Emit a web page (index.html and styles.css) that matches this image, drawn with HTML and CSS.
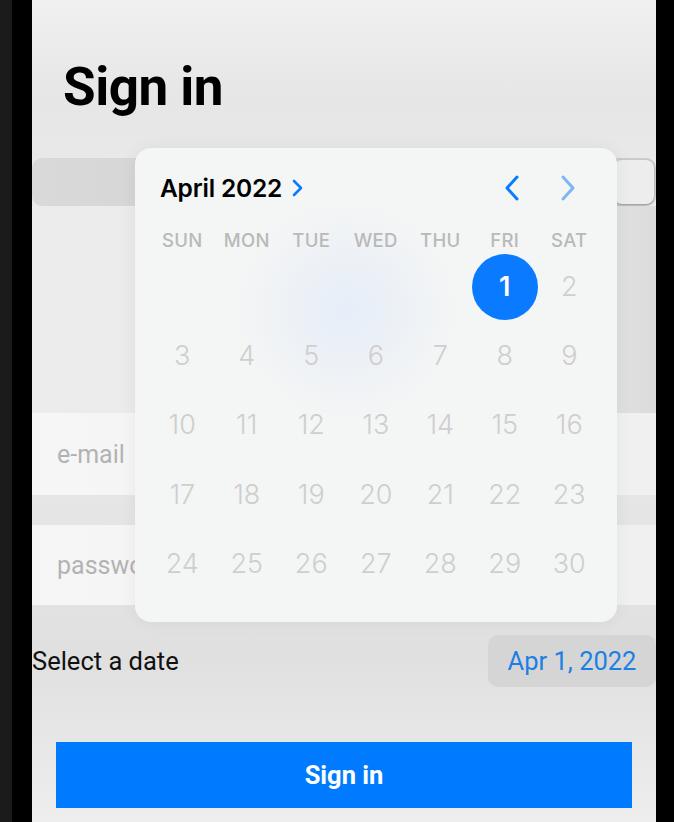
FILE: index.html
```html
<!DOCTYPE html>
<html lang="en">

<head>
    <meta charset="utf-8">
    <meta name="viewport" content="width=device-width, initial-scale=1.0">
    <title>Sign in</title>
    <link rel="stylesheet" href="styles.css">
</head>

<body>

    <div class="frame">
        <div class="edge"></div>

        <main class="screen">
            <h1 class="title">Sign in</h1>

            <div class="segment">
                <div class="segment_on"></div>
            </div>

            <div class="blank"></div>

            <div class="field">e-mail</div>
            <div class="field field_pw">password</div>

            <div class="date_row">
                <span>Select a date</span>
                <button class="date_btn">Apr 1, 2022</button>
            </div>

            <button class="signin">Sign in</button>

            <section class="picker">
                <header class="picker_head">
                    <div class="month">April 2022
                        <svg width="12" height="18" viewBox="0 0 12 18"><polyline points="2,2 9,9 2,16" fill="none" stroke="#0a7aff" stroke-width="2.6" stroke-linecap="round" stroke-linejoin="round"/></svg>
                    </div>
                    <div class="arrows">
                        <svg width="20" height="28" viewBox="0 0 20 28"><polyline points="15,3 5,14 15,25" fill="none" stroke="#0a7aff" stroke-width="3" stroke-linecap="round" stroke-linejoin="round"/></svg>
                        <svg width="20" height="28" viewBox="0 0 20 28"><polyline points="5,3 15,14 5,25" fill="none" stroke="#7db6f3" stroke-width="3" stroke-linecap="round" stroke-linejoin="round"/></svg>
                    </div>
                </header>

                <div class="days">
                    <span class="wd">SUN</span><span class="wd">MON</span><span class="wd">TUE</span><span class="wd">WED</span><span class="wd">THU</span><span class="wd">FRI</span><span class="wd">SAT</span>
                </div>
                <div class="days nums">
                    <span></span><span></span><span></span><span></span><span></span>
                    <span class="sel">1</span><span>2</span>
                    <span>3</span><span>4</span><span>5</span><span>6</span><span>7</span><span>8</span><span>9</span>
                    <span>10</span><span>11</span><span>12</span><span>13</span><span>14</span><span>15</span><span>16</span>
                    <span>17</span><span>18</span><span>19</span><span>20</span><span>21</span><span>22</span><span>23</span>
                    <span>24</span><span>25</span><span>26</span><span>27</span><span>28</span><span>29</span><span>30</span>
                </div>
            </section>
        </main>

        <div class="edge_r"></div>
    </div>

</body></html>
```

FILE: styles.css
```css
* {
    box-sizing: border-box;
}

body {
    margin: 0;
    background-color: #000;
    font-family: Roboto, "Liberation Sans", sans-serif;
}

.frame {
    display: flex;
    height: 822px;
    overflow: hidden;
}

.edge {
    width: 32px;
    border-left: 12px solid #1b1b1b;
    background-color: #000;
}

.edge_r {
    flex: 1;
    background-color: #000;
}

.screen {
    position: relative;
    width: 624px;
    background: linear-gradient(180deg, #f0f0f0 0%, #e6e6e6 12%, #ececec 30%, #e6e6e6 60%, #e0e0e0 80%, #eeeeee 100%);
}

.title {
    margin: 0;
    padding: 56px 0 0 31px;
    height: 158px;
    font-size: 53px;
    font-weight: 700;
    line-height: 62px;
    color: #000;
    letter-spacing: -0.5px;
}

.segment {
    height: 48px;
    border-radius: 10px;
    background: linear-gradient(90deg, #d9d9d9, #cbcbcb);
    display: flex;
    justify-content: flex-end;
    padding: 2px;
}

.segment_on {
    width: 40px;
    border-radius: 8px;
    background-color: #ededed;
    box-shadow: 0 1px 2px rgba(0, 0, 0, 0.25);
}

.blank {
    height: 207px;
    background: linear-gradient(90deg, #ececec 0%, #e9e9e9 80%, #dcdcdc 100%);
}

.field {
    height: 82px;
    padding: 0 0 0 25px;
    display: flex;
    align-items: center;
    background: linear-gradient(90deg, #f6f6f6, #f0f0f0);
    color: #b3b3b3;
    font-size: 25px;
}

.field_pw {
    margin-top: 30px;
    height: 80px;
}

.date_row {
    margin-top: 30px;
    display: flex;
    justify-content: space-between;
    align-items: center;
    font-size: 25.5px;
    color: #111;
}

.date_btn {
    height: 52px;
    width: 168px;
    border: none;
    border-radius: 10px;
    background-color: #d5d5d5;
    color: #1c7fe4;
    font-family: inherit;
    font-size: 25.5px;
    padding: 0 0 0 0;
}

.signin {
    display: block;
    margin: 55px 24px 0;
    width: 576px;
    height: 66px;
    border: none;
    background-color: #007bff;
    color: #fff;
    font-family: inherit;
    font-size: 25.5px;
    font-weight: 700;
}

.picker {
    position: absolute;
    left: 103px;
    top: 148px;
    width: 482px;
    height: 474px;
    border-radius: 16px;
    background: radial-gradient(circle at 212px 162px, #e5eef9 0, #edf1f6 55px, #f4f5f5 110px);
    box-shadow: 0 0 18px rgba(0, 0, 0, 0.06);
    padding: 26px 15px 0;
    font-family: Inter, Roboto, sans-serif;
}

.picker_head {
    display: flex;
    justify-content: space-between;
    align-items: center;
    padding: 0 24px 0 10px;
    height: 28px;
}

.month {
    font-size: 24.5px;
    font-weight: 600;
    color: #000;
    display: flex;
    align-items: center;
    gap: 10px;
    letter-spacing: -0.2px;
}

.arrows {
    display: flex;
    gap: 36px;
}

.days {
    display: grid;
    grid-template-columns: repeat(7, 64.5px);
    justify-items: center;
    align-items: center;
}

.wd {
    margin-top: 27px;
    height: 24px;
    font-size: 18.5px;
    font-weight: 500;
    color: #b9b9b9;
    letter-spacing: 0.3px;
}

.nums {
    margin-top: -1px;
    grid-auto-rows: 69.2px;
}

.nums span {
    font-size: 27px;
    font-weight: 300;
    color: #cecece;
}

.nums .sel {
    width: 66px;
    height: 66px;
    border-radius: 50%;
    background-color: #0a7aff;
    color: #fff;
    font-weight: 600;
    display: flex;
    align-items: center;
    justify-content: center;
}
```
